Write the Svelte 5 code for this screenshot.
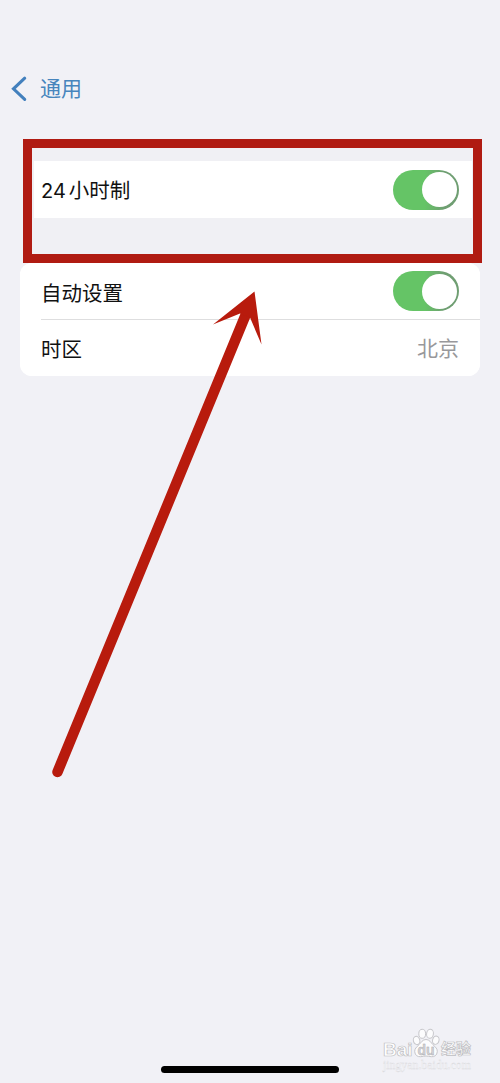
<script>
	let is24Hour = true;
	let autoSet = true;
	let timezone = '北京';
</script>

<main>
	<header>
		<button class="back">
			<svg class="chevron" width="16" height="26" viewBox="0 0 16 26">
				<path d="M13.700 2.2 2.500 12.800l11.200 10.600" />
			</svg>
			<span>通用</span>
		</button>
	</header>

	<section class="highlight">
		<div class="row">
			<span class="label hours">24<span class="cn">小时制</span></span>
			<button
				class="toggle"
				class:on={is24Hour}
				aria-label="24小时制"
				on:click={() => (is24Hour = !is24Hour)}
			></button>
		</div>
	</section>

	<section class="card">
		<div class="row">
			<span class="label auto">自动设置</span>
			<button
				class="toggle"
				class:on={autoSet}
				aria-label="自动设置"
				on:click={() => (autoSet = !autoSet)}
			></button>
		</div>
		<div class="divider"></div>
		<div class="row">
			<span class="label">时区</span>
			<span class="value">{timezone}</span>
		</div>
	</section>

	<!-- arrow pointing at the first setting -->
	<svg class="arrow" width="500" height="1083" viewBox="0 0 500 1083">
		<path d="M57.5 772 246 314" />
		<polygon points="254.500,291.500 213,324.500 240,313.500 250,317.500 261.500,344.500" />
	</svg>

	<footer>
		<div class="watermark">
			<div class="brand">
				<span class="bai">Bai</span>
				<svg class="paw" width="28" height="30" viewBox="0 0 28 30">
					<ellipse cx="4.6" cy="12.5" rx="3.2" ry="4.2" transform="rotate(-15 4.6 12.5)" />
					<ellipse cx="10.2" cy="5.8" rx="3.4" ry="4.500" />
					<ellipse cx="18" cy="5.8" rx="3.4" ry="4.500" transform="rotate(8 18 5.8)" />
					<ellipse cx="23.800" cy="12.2" rx="3.2" ry="4.2" transform="rotate(15 23.8 12.2)" />
					<path
						d="M14 11.500c-3.500 0-4.800 3-7 5.200-2.500 2.500-4.500 4-4.300 7 .3 3.600 2.800 5.300 6 5 2-.2 3.500-.7 5.300-.7s3.300.5 5.300.7c3.200.3 5.700-1.400 6-5 .2-3-1.800-4.500-4.300-7-2.200-2.200-3.500-5.200-7-5.200z"
					/>
					<text x="14" y="26.500" text-anchor="middle">du</text>
				</svg>
				<span class="jingyan">经验</span>
			</div>
			<div class="url">jingyan.baidu.com</div>
		</div>
		<div class="home-bar"></div>
	</footer>
</main>

<style>
	:global(body) {
		margin: 0;
		background: #f1f1f6;
	}
	main {
		position: relative;
		display: flex;
		flex-direction: column;
		box-sizing: border-box;
		width: 500px;
		height: 1083px;
		overflow: hidden;
		background: #f1f1f6;
		font-family: 'Inter', 'Noto Sans CJK SC', sans-serif;
		color: #111;
	}
	button {
		border: none;
		padding: 0;
		background: none;
		font-family: inherit;
		cursor: pointer;
	}
	header {
		height: 63px;
		padding: 76px 0 0 11px;
	}
	.back {
		display: flex;
		align-items: center;
		height: 26px;
		gap: 13px;
		color: #4785bd;
		font-size: 21px;
		line-height: 26px;
	}
	.chevron path {
		fill: none;
		stroke: #4380bd;
		stroke-width: 3.1;
		stroke-linecap: round;
		stroke-linejoin: miter;
	}
	.highlight {
		position: relative;
		z-index: 1;
		box-sizing: border-box;
		width: 459px;
		height: 124px;
		margin-left: 23px;
		padding: 13px 1px 0 2px;
		border: 9px solid #b01b12;
		background: #f0f0f4;
	}
	.row {
		display: flex;
		align-items: center;
		justify-content: space-between;
		height: 57px;
		background: #fff;
	}
	.highlight .row {
		padding: 0 13px 0 7px;
	}
	.label {
		padding-top: 3px;
		font-size: 20.5px;
		line-height: 28px;
	}
	.hours {
		font-size: 20px;
	}
	.auto {
		padding-top: 5px;
	}
	.cn {
		margin-left: 3px;
		font-size: 20.5px;
	}
	.toggle {
		display: flex;
		align-items: center;
		box-sizing: border-box;
		width: 66px;
		height: 40px;
		padding: 0 2.5px;
		border-radius: 20px;
		background: #d9d9dc;
	}
	.toggle::before {
		content: '';
		width: 35px;
		height: 35px;
		border-radius: 50%;
		background: #fff;
	}
	.toggle.on {
		justify-content: flex-end;
		background: linear-gradient(90deg, #65c466 48%, #6f9e72 78%);
	}
	.card {
		display: flex;
		flex-direction: column;
		width: 460px;
		height: 113px;
		margin-left: 20px;
		border-radius: 12px;
		background: #fff;
		overflow: hidden;
	}
	.card .row {
		height: 56px;
		padding: 0 21px;
	}
	.divider {
		height: 1px;
		margin-left: 21px;
		flex-shrink: 0;
		background: #dededf;
	}
	.value {
		padding-top: 2px;
		color: #98989b;
		font-size: 21px;
		line-height: 28px;
	}
	.arrow {
		position: absolute;
		z-index: 2;
		left: 0;
		top: 0;
		pointer-events: none;
	}
	.arrow path {
		fill: none;
		stroke: #b81b0d;
		stroke-width: 10.5;
		stroke-linecap: round;
	}
	.arrow polygon {
		fill: #b81b0d;
	}
	footer {
		display: flex;
		flex-direction: column;
		margin-top: auto;
		padding-bottom: 10px;
	}
	.watermark {
		align-self: flex-end;
		width: 117px;
		height: 38px;
	}
	.brand {
		display: flex;
		align-items: flex-end;
		height: 31px;
		color: #fff;
		font-family: 'Liberation Sans', 'Noto Sans CJK SC', sans-serif;
		font-weight: bold;
		-webkit-text-stroke: 0.7px #bdbdc1;
	}
	.bai {
		width: 29px;
		font-size: 19px;
		line-height: 19px;
	}
	.paw {
		margin-bottom: 1px;
		fill: #fcfcfd;
		stroke: #c6c6ca;
		stroke-width: 1;
	}
	.paw text {
		fill: #d4d4d7;
		stroke: #a9a9ad;
		stroke-width: 0.4;
		-webkit-text-stroke: 0.4px #a9a9ad;
		font-size: 14px;
	}
	.jingyan {
		margin-left: 1px;
		font-size: 15px;
		line-height: 20px;
	}
	.url {
		color: #fafafc;
		font-family: 'Liberation Serif', serif;
		font-size: 11.8px;
		line-height: 12px;
		-webkit-text-stroke: 0.3px #d8d8dc;
	}
	.home-bar {
		align-self: center;
		width: 178px;
		height: 7px;
		border-radius: 4px;
		background: #000;
	}
</style>
